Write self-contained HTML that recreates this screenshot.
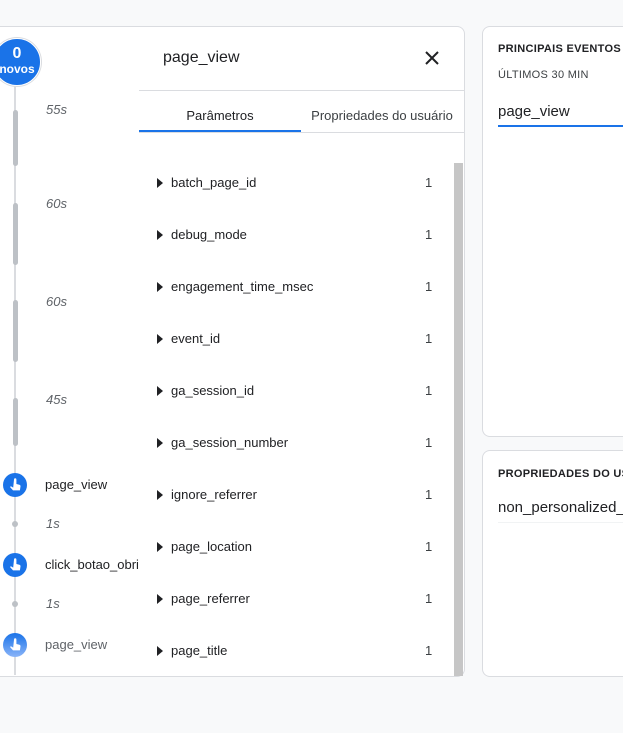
<!DOCTYPE html>
<html><head><style>
html,body{margin:0;width:623px;height:733px;overflow:hidden}
body{background:#f8f9fa;font-family:"Liberation Sans",Roboto,sans-serif;position:relative;color:#202124}
.abs{position:absolute}
.card{position:absolute;background:#fff;border:1px solid #dadce0;border-radius:8px;box-sizing:border-box}
.lbl{position:absolute;left:46px;font-size:13px;font-style:italic;color:#5f6368}
.bar{position:absolute;left:13px;width:5px;background:#bdc1c6;border-radius:3px}
.ev{position:absolute;left:45px;font-size:13px;color:#202124}
.ic{position:absolute;left:3px;width:24px;height:24px;border-radius:50%;background:#1a73e8}
.row{position:absolute;left:157px;font-size:13px;color:#202124;width:280px}
.row .t{position:absolute;left:0;top:1px;width:0;height:0;border-left:6px solid #202124;border-top:5px solid transparent;border-bottom:5px solid transparent}
.row .n{position:absolute;left:14px;top:-2px}
.row .v{position:absolute;left:268px;top:-2px;color:#3c4043}
.dot{position:absolute;left:12px;width:6px;height:6px;border-radius:50%;background:#bdc1c6}
</style></head><body>
<div class="card" style="left:0;top:26px;width:465px;height:651px;border-left:none;border-radius:0 8px 8px 0"></div>
<div class="card" style="left:482px;top:26px;width:141px;height:411px;border-right:none;border-radius:8px 0 0 8px"></div>
<div class="card" style="left:482px;top:450px;width:141px;height:227px;border-right:none;border-radius:8px 0 0 8px"></div>

<!-- timeline -->
<div class="abs" style="left:14px;top:80px;width:2px;height:595px;background:#dadce0"></div>
<div class="abs" style="left:-7px;top:38px;width:46px;height:46px;border-radius:50%;background:#1a73e8;border:1px solid #fff;box-shadow:0 0 0 1px #dadce0;color:#fff;text-align:center">
<div style="font-size:16px;font-weight:bold;margin-top:6px;line-height:18px">0</div>
<div style="font-size:12px;font-weight:bold;line-height:13px">novos</div></div>
<div class="bar" style="top:110px;height:56px"></div>
<div class="bar" style="top:203px;height:62px"></div>
<div class="bar" style="top:300px;height:62px"></div>
<div class="bar" style="top:398px;height:48px"></div>
<div class="lbl" style="top:102px">55s</div>
<div class="lbl" style="top:196px">60s</div>
<div class="lbl" style="top:294px">60s</div>
<div class="lbl" style="top:392px">45s</div>
<div class="ic" style="top:473px"><svg width="24" height="24" viewBox="0 0 24 24"><path d="M11 6.5a1.2 1.2 0 0 1 2.4 0V11l3 .8c.8.2 1.2.8 1.1 1.6l-.6 4H10l-3-3.4 .9-.8 2.3 1.4z" fill="#fff"/></svg></div>
<div class="ev" style="top:477px">page_view</div>
<div class="dot" style="top:521px"></div>
<div class="lbl" style="top:516px">1s</div>
<div class="ic" style="top:553px"><svg width="24" height="24" viewBox="0 0 24 24"><path d="M11 6.5a1.2 1.2 0 0 1 2.4 0V11l3 .8c.8.2 1.2.8 1.1 1.6l-.6 4H10l-3-3.4 .9-.8 2.3 1.4z" fill="#fff"/></svg></div>
<div class="ev" style="top:557px">click_botao_obri</div>
<div class="dot" style="top:601px"></div>
<div class="lbl" style="top:596px">1s</div>
<div class="ic" style="top:633px;background:linear-gradient(#1a73e8,#8ab4f8)"><svg width="24" height="24" viewBox="0 0 24 24"><path d="M11 6.5a1.2 1.2 0 0 1 2.4 0V11l3 .8c.8.2 1.2.8 1.1 1.6l-.6 4H10l-3-3.4 .9-.8 2.3 1.4z" fill="#fff"/></svg></div>
<div class="ev" style="top:637px;color:#5f6368">page_view</div>

<!-- panel -->
<div class="abs" style="left:163px;top:49px;font-size:16px">page_view</div>
<svg class="abs" style="left:424px;top:50px" width="16" height="16" viewBox="0 0 16 16"><path d="M2 2L14 14M14 2L2 14" stroke="#202124" stroke-width="2"/></svg>
<div class="abs" style="left:139px;top:90px;width:325px;height:1px;background:#dadce0"></div>
<div class="abs" style="left:139px;top:108px;width:162px;text-align:center;font-size:13px">Parâmetros</div>
<div class="abs" style="left:301px;top:108px;width:162px;text-align:center;font-size:13px;color:#3c4043">Propriedades do usuário</div>
<div class="abs" style="left:139px;top:132px;width:325px;height:1px;background:#dadce0"></div>
<div class="abs" style="left:139px;top:130px;width:162px;height:2px;background:#1a73e8"></div>
<div class="abs" style="left:454px;top:163px;width:9px;height:513px;background:#c6c6c6"></div>

<div class="row" style="top:177px"><div class="t"></div><div class="n">batch_page_id</div><div class="v">1</div></div>
<div class="row" style="top:229px"><div class="t"></div><div class="n">debug_mode</div><div class="v">1</div></div>
<div class="row" style="top:281px"><div class="t"></div><div class="n">engagement_time_msec</div><div class="v">1</div></div>
<div class="row" style="top:333px"><div class="t"></div><div class="n">event_id</div><div class="v">1</div></div>
<div class="row" style="top:385px"><div class="t"></div><div class="n">ga_session_id</div><div class="v">1</div></div>
<div class="row" style="top:437px"><div class="t"></div><div class="n">ga_session_number</div><div class="v">1</div></div>
<div class="row" style="top:489px"><div class="t"></div><div class="n">ignore_referrer</div><div class="v">1</div></div>
<div class="row" style="top:541px"><div class="t"></div><div class="n">page_location</div><div class="v">1</div></div>
<div class="row" style="top:593px"><div class="t"></div><div class="n">page_referrer</div><div class="v">1</div></div>
<div class="row" style="top:645px"><div class="t"></div><div class="n">page_title</div><div class="v">1</div></div>

<!-- right -->
<div class="abs" style="left:498px;top:43px;font-size:11px;font-weight:bold;letter-spacing:.3px">PRINCIPAIS EVENTOS</div>
<div class="abs" style="left:498px;top:69px;font-size:11px;letter-spacing:.3px;color:#3c4043">ÚLTIMOS 30 MIN</div>
<div class="abs" style="left:498px;top:103px;font-size:15px">page_view</div>
<div class="abs" style="left:498px;top:125px;width:125px;height:2px;background:#1a73e8"></div>
<div class="abs" style="left:498px;top:468px;width:125px;overflow:hidden;font-size:11px;font-weight:bold;letter-spacing:.3px;white-space:nowrap">PROPRIEDADES DO USUÁRIO</div>
<div class="abs" style="left:498px;top:499px;width:125px;overflow:hidden;font-size:15px;white-space:nowrap">non_personalized_ads</div>
<div class="abs" style="left:498px;top:522px;width:125px;height:1px;background:#f1f3f4"></div>
</body></html>
